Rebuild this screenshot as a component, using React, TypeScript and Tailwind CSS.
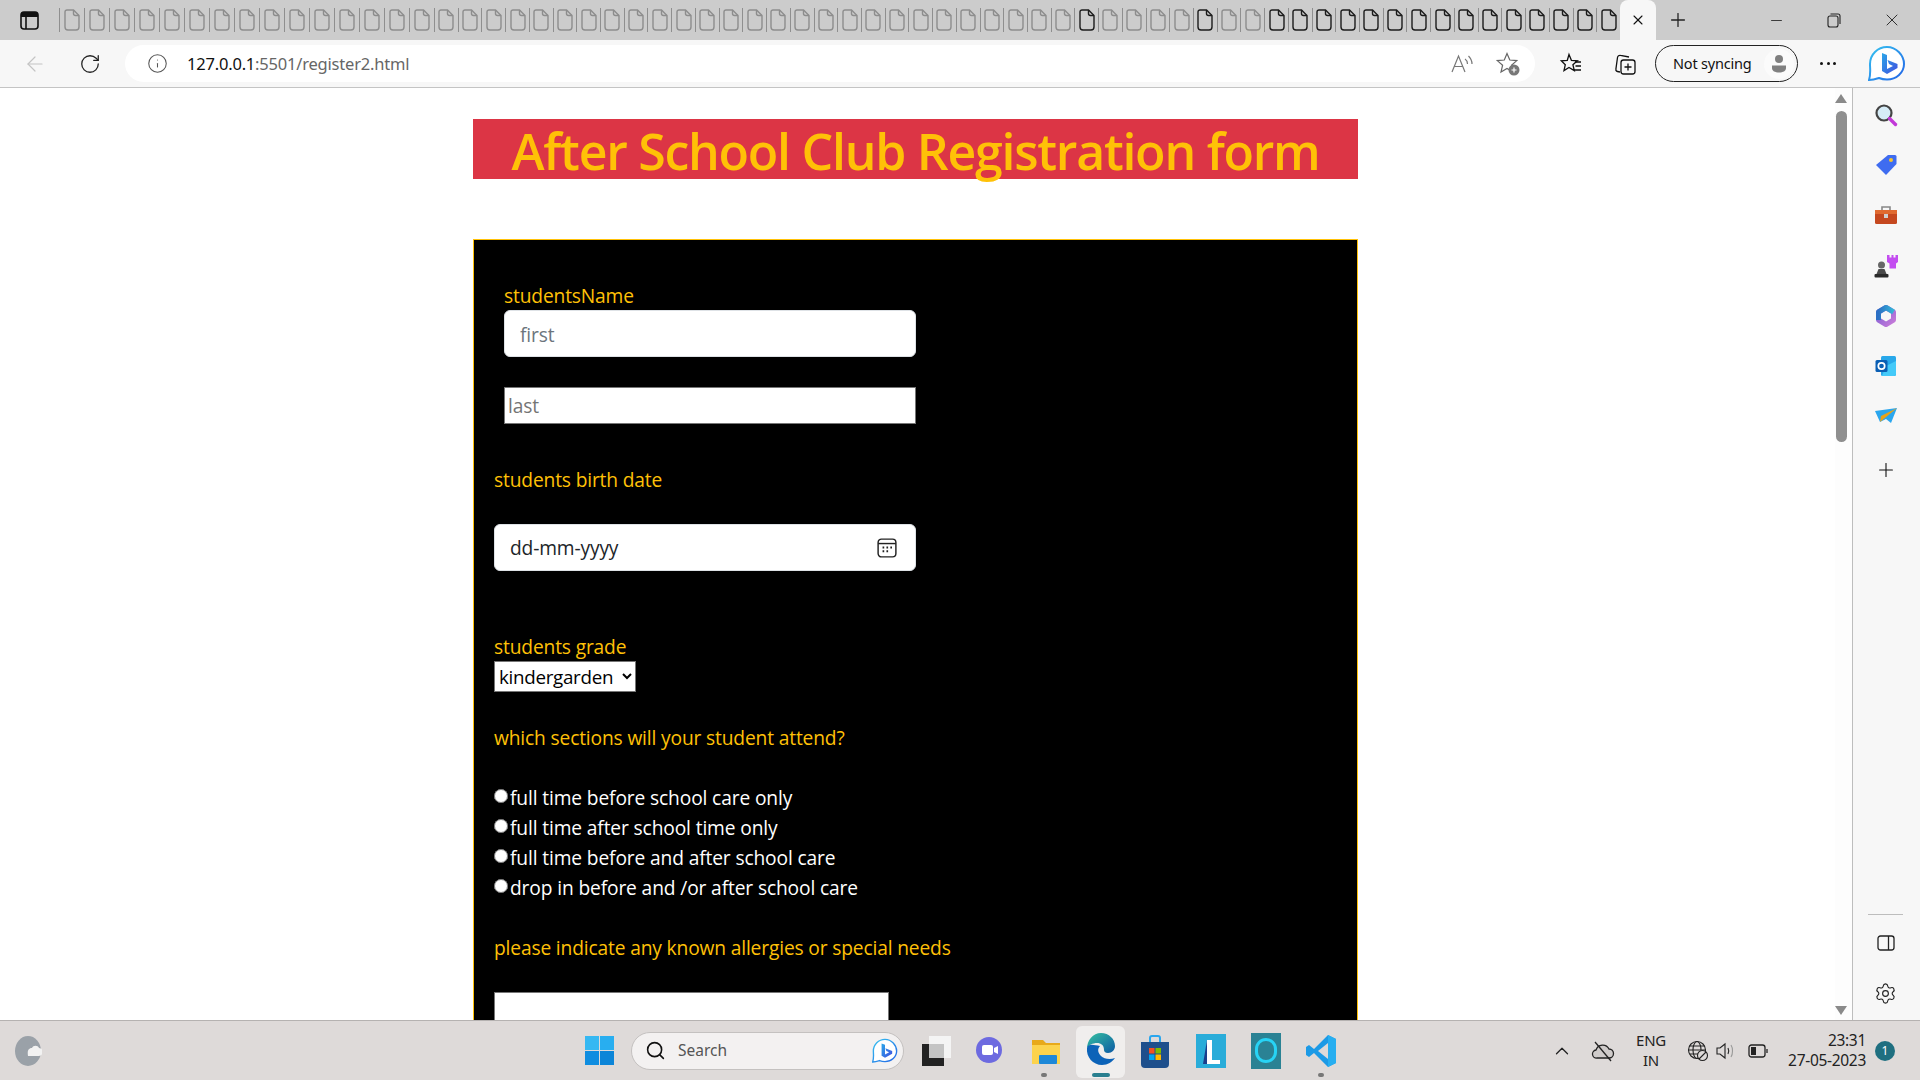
import React from 'react';
import { Plus, X, Minus, ArrowLeft, RotateCw, Info, ChevronUp, Settings, Search } from 'lucide-react';

const FONT = { sans: 'font-["Open_Sans","Noto_Sans",sans-serif]' };

const TAB_COUNT = 65;
const DARK_TABS = [42, 47];

const PageIcon: React.FC<{ dark: boolean }> = ({ dark }) => (
  <svg width="16" height="22" viewBox="0 0 16 22" fill="none" stroke={dark ? '#1c1c1c' : '#8d8d8d'} strokeWidth="1.4">
    <path d="M3 1h6.5L15 6.5V18a3 3 0 0 1-3 3H4a3 3 0 0 1-3-3V3a2 2 0 0 1 2-2Z" />
    <path d="M9.5 1v3.5a2 2 0 0 0 2 2H15" />
  </svg>
);

const BingLogo: React.FC<{ size: number }> = ({ size }) => (
  <svg width={size} height={size} viewBox="0 0 38 38" fill="none">
    <defs>
      <linearGradient id="bubble" x1="0" y1="0" x2="1" y2="1">
        <stop offset="0" stopColor="#36c3f0" />
        <stop offset="1" stopColor="#2264e6" />
      </linearGradient>
      <linearGradient id="bee" x1="0" y1="0" x2="1" y2="1">
        <stop offset="0" stopColor="#2aa6e8" />
        <stop offset="1" stopColor="#4050e0" />
      </linearGradient>
    </defs>
    <path d="M19 2C9.6 2 2 9.5 2 19c0 5 1 10-1 16 3 0 7-1 10-2 2.500 1 5 1.500 8 1.500 9.400 0 17-7 17-15.500S28.400 2 19 2Z" fill="#fff" stroke="url(#bubble)" strokeWidth="2" />
    <path d="M14 8l5 2v14l6-3-4-2-1.500-4 10 4v4l-10.500 6-5-3Z" fill="url(#bee)" />
  </svg>
);

const Slot: React.FC<{ w: string; children?: React.ReactNode }> = ({ w, children }) => (
  <div className={`${w} shrink-0 h-full flex items-center justify-center relative`}>{children}</div>
);

const TabStrip: React.FC = () => (
  <div className="h-10 shrink-0 bg-[#cccccc] flex items-stretch">
    <Slot w="w-[59px]">
      <svg width="19" height="19" viewBox="0 0 19 19">
        <rect x="1" y="1" width="17" height="17" rx="3" fill="none" stroke="#111" strokeWidth="1.600" />
        <path d="M1 4a3 3 0 0 1 3-3h11a3 3 0 0 1 3 3v2H1Z" fill="#111" />
        <path d="M6 5v13" stroke="#111" strokeWidth="1.600" />
      </svg>
    </Slot>
    <div className="flex h-full">
      {Array.from({ length: TAB_COUNT }).map((_, i) => (
        <div
          key={i}
          className={`${i < 15 ? 'w-[25px]' : 'w-[23.73px]'} h-6 my-2 border-l border-[#8f8f8f] flex items-center justify-center`}
        >
          <PageIcon dark={DARK_TABS.includes(i) || i >= 50} />
        </div>
      ))}
    </div>
    <div className="w-[36px] shrink-0 bg-[#f7f7f7] rounded-t-lg flex items-center justify-center">
      <X size={16} color="#111" strokeWidth={1.6} />
    </div>
    <Slot w="w-[44px]">
      <Plus size={22} color="#222" strokeWidth={1.4} />
    </Slot>
    <Slot w="w-[54px]" />
    <Slot w="w-[45px]">
      <Minus size={17} color="#222" strokeWidth={1.2} />
    </Slot>
    <Slot w="w-[70px]">
      <svg width="14" height="15" viewBox="0 0 14 15" fill="none" stroke="#222" strokeWidth="1.100">
        <rect x="1" y="3" width="10" height="11" rx="2" />
        <path d="M3.500 1H11a2 2 0 0 1 2 2v8" />
      </svg>
    </Slot>
    <Slot w="w-[46px]">
      <X size={20} color="#222" strokeWidth={1.1} />
    </Slot>
  </div>
);

const Toolbar: React.FC = () => (
  <div className={`h-12 shrink-0 bg-[#f7f7f7] border-b border-[#c4c4c4] flex items-center ${FONT.sans}`}>
    <Slot w="w-[70px]">
      <ArrowLeft size={24} color="#c4c4c4" strokeWidth={1.2} />
    </Slot>
    <Slot w="w-[40px]">
      <RotateCw size={22} color="#222" strokeWidth={1.4} />
    </Slot>
    <div className="ml-[15px] w-[1410px] h-[37px] bg-white rounded-full flex items-center pl-[21px] pr-[5px]">
      <Info size={21} color="#555" strokeWidth={1.2} className="mx-[1px]" />
      <div className="ml-[18px] pt-[1px] flex-1 text-[16.500px] tracking-[-0.2px] font-['Noto_Sans',sans-serif] text-[#666]">
        <span className="text-[#111]">127.0.0.1</span>:5501/register2.html
      </div>
      <Slot w="w-[45px]">
        <svg width="26" height="24" viewBox="0 0 26 24" fill="none" stroke="#777" strokeWidth="1.200">
          <path d="M2 20 8.500 4 15 20M4.500 14.500h8" />
          <path d="M15 7c1.500 1 2.500 3 2.500 5M18.500 4c2 2 3.500 5 3.500 8" />
        </svg>
      </Slot>
      <Slot w="w-[45px]">
        <svg width="26" height="26" viewBox="0 0 26 26" fill="none">
          <path d="M12 2.500l2.800 6.500 7 .6-5.300 4.600 1.600 6.800L12 17.500l-6 3.500 1.600-6.800L2.300 9.600l7-.6Z" stroke="#666" strokeWidth="1.200" />
          <circle cx="19" cy="19" r="5.500" fill="#777" />
          <path d="M19 16.500v5M16.500 19h5" stroke="#fff" strokeWidth="1.200" />
        </svg>
      </Slot>
    </div>
    <Slot w="w-[72px]">
      <svg width="24" height="24" viewBox="0 0 24 24" fill="none" stroke="#111" strokeWidth="1.300">
        <path d="M10 2.500l2.400 5.800 6 .5-4.500 3.900 1.400 5.900-5.300-3.100-5 3.100 1.300-5.900L2.300 8.800l6-.5Z" />
        <path d="M16 10h6M16.500 14h5.500M15 18h7" />
      </svg>
    </Slot>
    <Slot w="w-[36px]">
      <svg width="24" height="24" viewBox="0 0 24 24" fill="none" stroke="#111" strokeWidth="1.300">
        <path d="M7 20l-2.500-.5a2 2 0 0 1-1.600-2.300L4.500 5.500A2.500 2.500 0 0 1 7.500 3.400L16 5" />
        <rect x="8" y="8" width="14" height="14" rx="2.500" />
        <path d="M15 11.500v7M11.500 15h7" />
      </svg>
    </Slot>
    <div className="ml-3 w-[143px] h-[37px] border-[1.5px] border-[#222] rounded-full flex items-center pl-[17px] bg-[#f7f7f7]">
      <span className="flex-1 text-[14.500px] tracking-[-0.2px] font-['Noto_Sans',sans-serif] text-[#111] whitespace-nowrap">Not syncing</span>
      <div className="w-[30px] h-[30px] mr-[3px] rounded-full bg-[#fbfbfb] flex items-center justify-center">
        <svg width="16" height="20" viewBox="0 0 16 20" fill="#808080">
          <circle cx="8" cy="5" r="4" />
          <path d="M1 11.500h14v2.500c0 3-3 4.500-7 4.500s-7-1.500-7-4.500Z" />
        </svg>
      </div>
    </div>
    <Slot w="w-[60px]">
      <div className="flex gap-[3.500px]">
        <span className="w-[3px] h-[3px] rounded-full bg-[#111]" />
        <span className="w-[3px] h-[3px] rounded-full bg-[#111]" />
        <span className="w-[3px] h-[3px] rounded-full bg-[#111]" />
      </div>
    </Slot>
    <Slot w="w-[58px]">
      <BingLogo size={38} />
    </Slot>
  </div>
);

const SectionLabel: React.FC<{ className?: string; children: React.ReactNode }> = ({ className, children }) => (
  <div className={`h-7 leading-7 text-[19.200px] tracking-[-0.15px] text-[#ffc107] ${className ?? ''}`}>{children}</div>
);

const RADIO_OPTIONS = [
  'full time before school care only',
  'full time after school time only',
  'full time before and after school care',
  'drop in before and /or after school care',
];

const FormPanel: React.FC = () => (
  <div className={`mt-[60px] border border-[#ffc107] bg-black h-[1100px] pl-5 ${FONT.sans}`}>
    <div className="pt-[42px] pl-[10px]">
      <SectionLabel>studentsName</SectionLabel>
      <input
        placeholder="first"
        className="block w-[412px] h-[47px] bg-white rounded-md border border-[#dee2e6] px-[15px] pt-[2px] text-[19.200px] tracking-[-0.15px] placeholder:text-[#6c757d]"
      />
      <input
        placeholder="last"
        className="mt-[30px] block w-[412px] h-[37px] bg-white border border-[#767676] px-[3px] text-[19.200px] tracking-[-0.15px] placeholder:text-[#757575]"
      />
    </div>
    <SectionLabel className="mt-[42px]">students birth date</SectionLabel>
    <div className="mt-[30px] w-[422px] h-[47px] bg-white rounded-md border border-[#dee2e6] flex items-center justify-between pl-[15px] pr-[18px]">
      <span className="pt-[2px] text-[19.200px] tracking-[-0.15px] text-[#212529]">dd-mm-yyyy</span>
      <svg width="20" height="20" viewBox="0 0 18 18" fill="none" stroke="#222" strokeWidth="1.300">
        <rect x="1" y="1" width="16" height="16" rx="3" />
        <path d="M1 5h16" />
        <path d="M5 8.500h1.500M8.500 8.500H10M12 8.500h1.500M5 12h1.500M8.500 12H10" strokeWidth="1.800" />
      </svg>
    </div>
    <SectionLabel className="mt-[62px]">students grade</SectionLabel>
    <select className="block w-[142px] h-[31px] bg-white border border-[#767676] pl-0 text-[18.800px] tracking-[-0.3px] text-black">
      <option>kindergarden</option>
    </select>
    <SectionLabel className="mt-[32px]">which sections will your student attend?</SectionLabel>
    <div className="mt-[31px]">
      {RADIO_OPTIONS.map(option => (
        <label key={option} className="h-[30px] flex items-center text-[19.200px] tracking-[-0.13px] text-white">
          <input type="radio" name="section" className="w-[14px] h-[14px] m-0 mr-[2px] -translate-y-[2px] appearance-auto" />
          {option}
        </label>
      ))}
    </div>
    <SectionLabel className="mt-[31px]">please indicate any known allergies or special needs</SectionLabel>
    <textarea className="mt-[30px] block w-[395px] h-[120px] bg-white border border-[#767676]" />
  </div>
);

const PageScrollbar: React.FC = () => (
  <div className="w-[17px] shrink-0 bg-[#fdfdfd] flex flex-col items-center pr-[5px]">
    <svg width="12" height="9" viewBox="0 0 12 9" className="mt-[6px]">
      <path d="M6 0l6 9H0Z" fill="#8a8a8a" />
    </svg>
    <div className="mt-[8px] w-[11px] h-[331px] rounded-full bg-[#8f8f8f]" />
    <div className="flex-1" />
    <svg width="12" height="9" viewBox="0 0 12 9" className="mb-[5px]">
      <path d="M6 9l6-9H0Z" fill="#8a8a8a" />
    </svg>
  </div>
);

const SIDE_ICONS: React.ReactNode[] = [
  <svg key="search" width="24" height="24" viewBox="0 0 24 24">
    <circle cx="10" cy="10" r="7.500" fill="#d6ecf7" stroke="#444" strokeWidth="2.200" />
    <path d="M15.500 15.500l6 6" stroke="#c239d8" strokeWidth="3.400" strokeLinecap="round" />
  </svg>,
  <svg key="tag" width="22" height="22" viewBox="0 0 22 22">
    <path d="M13 1h7a1.500 1.500 0 0 1 1.500 1.500V10L11 21 1 11Z" fill="#3f6cf0" />
    <circle cx="16" cy="6" r="2" fill="#f4c430" />
  </svg>,
  <svg key="tools" width="24" height="20" viewBox="0 0 24 20">
    <path d="M8 5V2h8v3" fill="none" stroke="#888" strokeWidth="1.600" />
    <rect x="1" y="5" width="22" height="14" rx="1.500" fill="#c5481f" />
    <rect x="1" y="5" width="22" height="4" fill="#e06a30" />
    <rect x="10" y="9" width="4" height="4" fill="#cfcfcf" />
  </svg>,
  <svg key="games" width="24" height="24" viewBox="0 0 24 24">
    <circle cx="7.500" cy="11" r="3.500" fill="#666" />
    <path d="M4.500 15h6l2 5h-10Z" fill="#4a4a4a" />
    <rect x="0.500" y="20" width="14" height="3.500" rx="1" fill="#2a2a2a" />
    <path d="M13 1h2.500v2.500h2V1h2v2.500h2V1H24v7l-2 1.500v5h-6.500v-5L13 8Z" fill="#c34df0" />
  </svg>,
  <svg key="m365" width="22" height="24" viewBox="0 0 22 24" fill="none">
    <defs>
      <linearGradient id="m1" x1="0" y1="0" x2="1" y2="0">
        <stop offset="0" stopColor="#2b6fc4" />
        <stop offset="1" stopColor="#35b6d8" />
      </linearGradient>
      <linearGradient id="m2" x1="0" y1="0" x2="1" y2="1">
        <stop offset="0" stopColor="#7a5fd6" />
        <stop offset="1" stopColor="#c77ad8" />
      </linearGradient>
    </defs>
    <path d="M11 3.500 18.500 8v8L11 20.500 3.500 16V8Z" stroke="url(#m2)" strokeWidth="5" strokeLinejoin="round" />
    <path d="M3.500 16V8L11 3.500 18.500 8" stroke="url(#m1)" strokeWidth="5" strokeLinejoin="round" />
  </svg>,
  <svg key="outlook" width="22" height="22" viewBox="0 0 22 22">
    <rect x="6" y="1" width="15" height="20" rx="1.500" fill="#28a8ea" />
    <path d="M11 11l10-5v13a2 2 0 0 1-2 2H7Z" fill="#50d9ff" opacity="0.700" />
    <rect x="0.500" y="5" width="12" height="12" rx="1.500" fill="#0a5fb4" />
    <circle cx="6.500" cy="11" r="3.200" fill="none" stroke="#fff" strokeWidth="1.700" />
  </svg>,
  <svg key="send" width="22" height="16" viewBox="0 0 22 16">
    <path d="M0 3 22 0 16 15 11 11 5 14Z" fill="#2aa6ee" />
    <path d="M22 0 6 8 5 14Z" fill="#e8a21a" />
  </svg>,
];

const SidePanel: React.FC = () => (
  <div className="w-[68px] shrink-0 bg-[#f7f7f7] border-l border-[#bdbdbd] flex flex-col items-center pr-[2px]">
    <div className="h-[2px]" />
    {SIDE_ICONS.map((icon, i) => (
      <div key={i} className="h-[50.200px] flex items-center justify-center">{icon}</div>
    ))}
    <div className="mt-[4px] h-[50px] flex items-center justify-center">
      <Plus size={22} color="#111" strokeWidth={1.2} />
    </div>
    <div className="flex-1" />
    <div className="w-[35px] h-px bg-[#bdbdbd]" />
    <div className="mt-[8px] h-[40px] flex items-center justify-center">
      <svg width="18" height="16" viewBox="0 0 18 16" fill="none" stroke="#222" strokeWidth="1.300">
        <rect x="1" y="1" width="16" height="14" rx="2.500" />
        <path d="M11.500 1v14" />
      </svg>
    </div>
    <div className="mt-[10px] mb-[7px] h-[40px] flex items-center justify-center">
      <Settings size={23} color="#222" strokeWidth={1.2} />
    </div>
  </div>
);

const Dot: React.FC<{ teal?: boolean }> = ({ teal }) => (
  <span className={`absolute bottom-[3px] left-1/2 -translate-x-1/2 h-[4px] rounded-full ${teal ? 'w-[18px] bg-[#2a7f8f]' : 'w-[6px] bg-[#777]'}`} />
);

const Taskbar: React.FC = () => (
  <div className="h-[60px] shrink-0 bg-[#dedad9] border-t border-[#b5b2b1] flex items-center font-['Noto_Sans',sans-serif] text-[#222]">
    <Slot w="w-[56px]">
      <svg width="28" height="30" viewBox="0 0 28 30">
        <ellipse cx="14" cy="15" rx="13" ry="15" fill="#9aa1a8" />
        <path d="M14 20h10a4 4 0 0 0 1-8c-1-3-6-3-7 0-3 0-5 2-4 8Z" fill="#f2f2f2" />
      </svg>
    </Slot>
    <div className="w-[529px] shrink-0" />
    <div className="w-[29px] h-[29px] shrink-0 grid grid-cols-2 gap-[1px]">
      <span className="bg-[#35b8f2]" />
      <span className="bg-[#28aef0]" />
      <span className="bg-[#0f8de0]" />
      <span className="bg-[#0c85d8]" />
    </div>
    <div className="ml-[17px] w-[273px] h-[38px] shrink-0 bg-[#f3f1f1] border border-[#c4c1c0] rounded-full flex items-center pl-[13px] pr-[5px]">
      <Search size={21} color="#111" strokeWidth={1.800} />
      <span className="ml-[12px] flex-1 text-[15.500px] text-[#555]">Search</span>
      <BingLogo size={26} />
    </div>
    <Slot w="w-[62px]">
      <div className="relative w-[29px] h-[30px] ml-[3px]">
        <span className="absolute right-0 top-0 w-[22px] h-[22px] bg-[#f4f4f4]" />
        <span className="absolute left-0 bottom-0 w-[22px] h-[22px] bg-[#222]" />
        <span className="absolute left-[7px] top-[8px] w-[15px] h-[14px] bg-[#c4c4c4]" />
      </div>
    </Slot>
    <Slot w="w-[46px]">
      <svg width="30" height="30" viewBox="0 0 30 30" className="ml-[2px]">
        <circle cx="14" cy="14" r="13" fill="#6d6ae0" />
        <path d="M8 26l2-5h8Z" fill="#6d6ae0" />
        <rect x="7" y="9" width="11" height="10" rx="2" fill="#fff" />
        <path d="M19 12l4-2v8l-4-2Z" fill="#fff" />
      </svg>
    </Slot>
    <Slot w="w-[64px]">
      <svg width="30" height="30" viewBox="0 0 30 30" className="ml-[4px]">
        <path d="M1 4h11l3 3h14v21H1Z" fill="#e8a91a" />
        <rect x="1" y="9" width="28" height="19" fill="#fcd34d" />
        <rect x="8" y="19" width="18" height="9" rx="1" fill="#1e88d8" />
      </svg>
      <Dot />
    </Slot>
    <Slot w="w-[49px]">
      <div className="absolute inset-x-0 top-[5px] bottom-[2px] bg-[#f0eeed] rounded-md" />
      <svg width="30" height="34" viewBox="0 0 30 34" className="relative -mt-[3px]">
        <defs>
          <linearGradient id="edge" x1="0" y1="0" x2="1" y2="1">
            <stop offset="0" stopColor="#35c1a0" />
            <stop offset="1" stopColor="#0c59a4" />
          </linearGradient>
        </defs>
        <path d="M1 17C1 8 7 1 15 1c8 0 14 6 14 13 0 4-3 7-7 7-3 0-4-1.500-4-3 0-5-3-7-7-7-4 0-9 2-10 6Z" fill="url(#edge)" />
        <path d="M1 16c-1 9 6 17 15 17 6 0 10-3 13-7-5 2-11 1-14-2-3-3-4-7-1-10-6-1-12-3-13 2Z" fill="#0c63b8" />
      </svg>
      <Dot teal />
    </Slot>
    <Slot w="w-[60px]">
      <svg width="30" height="34" viewBox="0 0 30 34">
        <path d="M10 8V4a2 2 0 0 1 2-2h6a2 2 0 0 1 2 2v4" fill="none" stroke="#2aa6ee" strokeWidth="2" />
        <path d="M1 8h28v22a4 4 0 0 1-4 4H5a4 4 0 0 1-4-4Z" fill="#1e4f8c" />
        <rect x="9" y="14" width="5.500" height="5.500" fill="#f25022" />
        <rect x="15.500" y="14" width="5.500" height="5.500" fill="#7fba00" />
        <rect x="9" y="20.500" width="5.500" height="5.500" fill="#00a4ef" />
        <rect x="15.500" y="20.500" width="5.500" height="5.500" fill="#ffb900" />
      </svg>
    </Slot>
    <Slot w="w-[52px]">
      <svg width="30" height="34" viewBox="0 0 30 34">
        <rect width="30" height="34" fill="#29acd9" />
        <path d="M11 6h5v20h8v4H9Z" fill="#fff" />
        <path d="M11 6v24H7Z" fill="#1a3e8c" />
      </svg>
    </Slot>
    <Slot w="w-[58px]">
      <div className="w-[30px] h-[36px] bg-[#2a8294] flex items-center justify-center">
        <div className="w-[22px] h-[25px] rounded-full border-[3px] border-[#27d3f5]" />
      </div>
    </Slot>
    <Slot w="w-[52px]">
      <svg width="30" height="32" viewBox="0 0 30 32">
        <path d="M22 0l8 4v24l-8 4L8 18l-5 4-3-2v-8l3-2 5 4Z" fill="#1c9ae6" />
        <path d="M22 8v16l-10-8Z" fill="#dedad9" />
        <path d="M22 0l8 4v24l-8 4Z" fill="#27aef0" />
      </svg>
      <Dot />
    </Slot>
    <div className="w-[199px] shrink-0" />
    <Slot w="w-[32px]">
      <ChevronUp size={22} color="#222" strokeWidth={1.400} />
    </Slot>
    <Slot w="w-[50px]">
      <svg width="24" height="24" viewBox="0 0 24 24" fill="none" stroke="#222" strokeWidth="1.300">
        <path d="M6 19a4 4 0 0 1-1-8 7 7 0 0 1 13-1 4.500 4.500 0 0 1 0 9Z" fill="#cfcbca" />
        <path d="M4 3l16 19" />
      </svg>
    </Slot>
    <div className="w-[46px] shrink-0 -mt-[2px] text-center text-[15px] leading-[20px] tracking-[-0.3px]">
      <div>ENG</div>
      <div>IN</div>
    </div>
    <div className="w-[6px] shrink-0" />
    <Slot w="w-[36px]">
      <svg width="22" height="22" viewBox="0 0 22 22" fill="none" stroke="#222" strokeWidth="1.100">
        <circle cx="10" cy="10" r="8.500" />
        <ellipse cx="10" cy="10" rx="4" ry="8.500" />
        <path d="M1.500 10h17M2.500 6h15M2.500 14h15" />
        <circle cx="15.500" cy="15.500" r="5" fill="#dedad9" />
        <path d="M12 19l7-7" />
      </svg>
    </Slot>
    <Slot w="w-[20px]">
      <svg width="20" height="18" viewBox="0 0 20 18" fill="none" stroke="#222" strokeWidth="1.100">
        <path d="M1 6h3l5-4v14l-5-4H1Z" />
        <path d="M12 6c1 2 1 4 0 6" />
        <path d="M15 3c2 3 2 9 0 12" stroke="#999" />
      </svg>
    </Slot>
    <Slot w="w-[44px]">
      <svg width="20" height="14" viewBox="0 0 20 14" fill="none" stroke="#222" strokeWidth="1.300">
        <rect x="1" y="1" width="16" height="12" rx="2.500" />
        <rect x="3" y="3" width="5" height="8" fill="#222" stroke="none" />
        <path d="M19 5v4" />
      </svg>
    </Slot>
    <div className="w-[86px] shrink-0 -mt-[2px] text-right text-[15.500px] leading-[20px] tracking-[-0.3px] whitespace-nowrap">
      <div>23:31</div>
      <div>27-05-2023</div>
    </div>
    <div className="ml-[9px] w-5 h-5 shrink-0 rounded-full bg-[#1f6f80] text-white text-[12px] flex items-center justify-center">1</div>
  </div>
);

export default function App() {
  return (
    <div className="w-[1920px] h-[1080px] overflow-hidden flex flex-col bg-white">
      <TabStrip />
      <Toolbar />
      <div className="flex-1 min-h-0 flex">
        <div className="flex-1 min-w-0 overflow-hidden bg-white pl-[473px] pt-[31px]">
          <div className="w-[885px]">
            <div className={`h-[60px] bg-[#dc3545] text-center text-[50px] leading-[64px] font-semibold tracking-[-1.250px] text-[#ffc107] whitespace-nowrap ${FONT.sans}`}>
              After School Club Registration form
            </div>
            <FormPanel />
          </div>
        </div>
        <PageScrollbar />
        <SidePanel />
      </div>
      <Taskbar />
    </div>
  );
}
